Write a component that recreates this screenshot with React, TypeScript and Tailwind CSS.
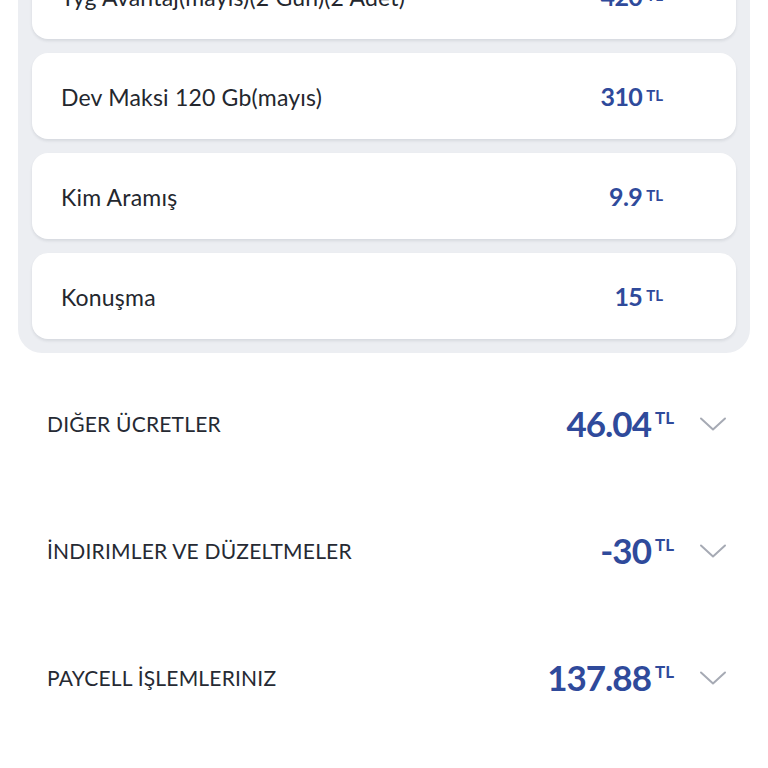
import React from 'react';

const items = [
  { label: 'Tyg Avantaj(mayıs)(2 Gün)(2 Adet)', amount: '420' },
  { label: 'Dev Maksi 120 Gb(mayıs)', amount: '310' },
  { label: 'Kim Aramış', amount: '9.9' },
  { label: 'Konuşma', amount: '15' },
];

const sections = [
  { label: 'DIĞER ÜCRETLER', amount: '46.04' },
  { label: 'İNDIRIMLER VE DÜZELTMELER', amount: '-30' },
  { label: 'PAYCELL İŞLEMLERINIZ', amount: '137.88' },
];

const Chevron = () => (
  <svg width="28" height="16" viewBox="0 0 28 16" fill="none" className="text-[#a6aab4]">
    <path d="M2 2.5 L14 13.5 L26 2.5" stroke="currentColor" strokeWidth="2" strokeLinecap="round" strokeLinejoin="round" />
  </svg>
);

const App = () => {
  return (
    <div className="w-[768px] h-[768px] overflow-hidden bg-white font-['Lato',sans-serif]">
      <div className="mt-[-61px] mx-[18px] bg-[#eceef2] rounded-b-[24px] p-[14px] flex flex-col gap-[14px]">
        {items.map((it) => (
          <div
            key={it.label}
            className="h-[86px] bg-white rounded-[16px] shadow-[0_2px_3px_rgba(30,40,60,0.10)] flex items-center justify-between pl-[29px] pr-[73px]"
          >
            <span className="text-[23px] text-[#24272e] tracking-[0.2px] pt-[3px]">{it.label}</span>
            <span className="flex items-start text-[#2f4a9b] font-bold">
              <span className="text-[25px] leading-none tracking-[-0.6px]">{it.amount}</span>
              <span className="text-[15px] leading-none ml-[4px] mt-[4px]">TL</span>
            </span>
          </div>
        ))}
      </div>

      <div className="mt-[7px] flex flex-col">
        {sections.map((s) => (
          <div key={s.label} className="h-[127px] flex items-center justify-between pl-[47px] pr-[41px]">
            <span className="text-[21px] text-[#262a33] tracking-[0.2px]">{s.label}</span>
            <div className="flex items-center">
              <span className="flex items-start text-[#2f4a9b] font-bold">
                <span className="text-[35px] leading-none tracking-[-1px]">{s.amount}</span>
                <span className="text-[17px] leading-none ml-[4px] mt-[3px]">TL</span>
              </span>
              <span className="ml-[25px] flex items-center">
                <Chevron />
              </span>
            </div>
          </div>
        ))}
      </div>
    </div>
  );
};

export default App;
